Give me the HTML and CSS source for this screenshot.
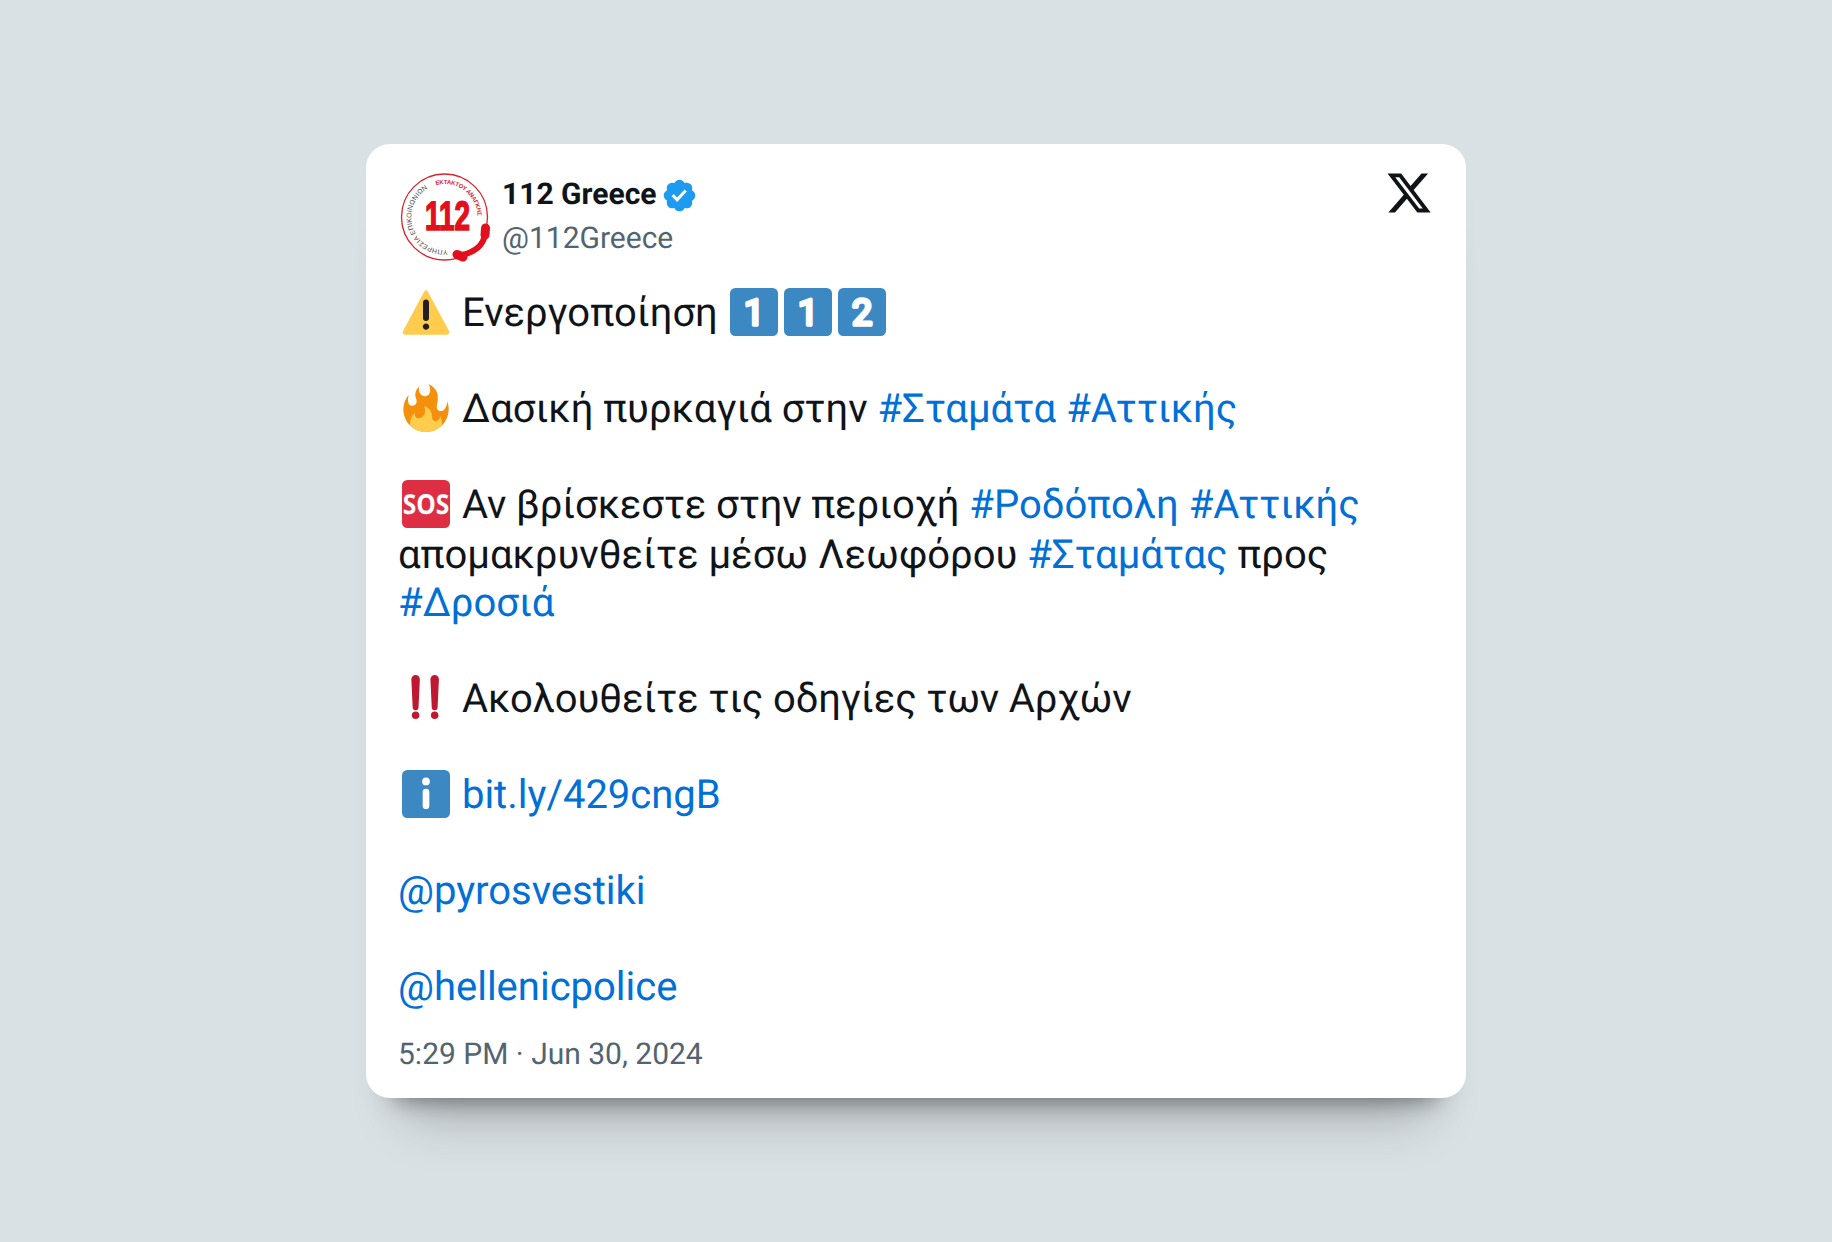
FILE: index.html
```html
<!DOCTYPE html>
<html lang="el">
<head>
<meta charset="utf-8">
<title>112 Greece</title>
<link rel="stylesheet" href="styles.css">
</head>
<body>
<article class="card">
  <header class="head">
    <div class="author">
      <svg class="avatar" viewBox="0 0 90 90" role="img" aria-label="112">
        <defs>
          <path id="ring-a" d="M47.4 77.9 A33 33 0 0 1 36 13.1"/>
          <path id="ring-b" d="M36 13.1 A33 33 0 0 1 77 50.7"/>
        </defs>
        <circle cx="44.500" cy="45" r="43" class="logo-ring"/>
        <text class="logo-small"><textPath href="#ring-a">ΥΠΗΡΕΣΙΑ ΕΠΙΚΟΙΝΩΝΙΩΝ</textPath></text>
        <text class="logo-red"><textPath href="#ring-b">ΕΚΤΑΚΤΟΥ ΑΝΑΓΚΗΣ</textPath></text>
        <text class="logo-num" x="25" y="57.500" textLength="45" lengthAdjust="spacingAndGlyphs">112</text>
        <path class="logo-gap" d="M85 60 Q83 78 60 84"/>
        <path class="logo-phone" d="M85 62 Q83 78 62 83"/>
        <path class="logo-phone-end" d="M85.500 56 L85 63 M57 82.500 L63 85"/>
      </svg>
      <div class="names">
        <div class="name">112 Greece
          <svg class="badge" viewBox="0 0 24 24"><path class="badge-fill" d="M22.25 12c0-1.43-.88-2.67-2.19-3.34.46-1.39.2-2.9-.81-3.91s-2.52-1.27-3.91-.81c-.66-1.31-1.91-2.19-3.34-2.19s-2.67.88-3.33 2.19c-1.4-.46-2.91-.2-3.92.81s-1.26 2.52-.8 3.91c-1.31.67-2.2 1.91-2.2 3.34s.89 2.67 2.2 3.34c-.46 1.39-.21 2.9.8 3.91s2.52 1.26 3.91.81c.67 1.31 1.91 2.19 3.34 2.19s2.68-.88 3.34-2.19c1.39.45 2.9.2 3.91-.81s1.27-2.52.81-3.91c1.31-.67 2.19-1.91 2.19-3.34zm-11.71 4.2L6.8 12.46l1.41-1.42 2.26 2.26 4.8-5.23 1.47 1.36-6.2 6.77z"/></svg>
        </div>
        <div class="handle">@112Greece</div>
      </div>
    </div>
    <svg class="xlogo" viewBox="0 0 24 24"><path d="M18.244 2.25h3.308l-7.227 8.26 8.502 11.24H16.17l-5.214-6.817L4.99 21.75H1.68l7.73-8.835L1.254 2.25H8.08l4.713 6.231zm-1.161 17.52h1.833L7.084 4.126H5.117z"/></svg>
  </header>
  <p class="text"><svg class="emoji" viewBox="0 0 36 36"><path class="e-yellow" d="M2.653 35C.811 35-.001 33.662.847 32.027L16.456 2.972c.849-1.635 2.238-1.635 3.087 0l15.609 29.055c.85 1.635.037 2.973-1.805 2.973H2.653z"/><path class="e-dark" d="M15.583 28.953c0-1.333 1.085-2.418 2.419-2.418 1.333 0 2.418 1.085 2.418 2.418 0 1.334-1.086 2.419-2.418 2.419-1.334 0-2.419-1.085-2.419-2.419zm.186-18.293c0-1.302.961-2.108 2.232-2.108 1.241 0 2.233.837 2.233 2.108v11.938c0 1.271-.992 2.108-2.233 2.108-1.271 0-2.232-.807-2.232-2.108V10.66z"/></svg> Ενεργοποίηση <svg class="emoji emoji-first" viewBox="0 0 36 36"><rect class="e-blue" width="36" height="36" rx="4"/><text class="key" x="18" y="27.800">1</text></svg><svg class="emoji" viewBox="0 0 36 36"><rect class="e-blue" width="36" height="36" rx="4"/><text class="key" x="18" y="27.800">1</text></svg><svg class="emoji" viewBox="0 0 36 36"><rect class="e-blue" width="36" height="36" rx="4"/><text class="key" x="18" y="27.800">2</text></svg><br><br><svg class="emoji" viewBox="0 0 36 36"><path class="e-orange" d="M35 19c0-2.062-.367-4.039-1.04-5.868-.46 5.389-3.333 8.157-6.335 6.868-2.812-1.208-.917-5.917-.777-8.164.236-3.809-.012-8.169-6.931-11.794 2.875 5.5.333 8.917-2.333 9.125-2.958.231-5.667-2.542-4.667-7.042-3.238 2.386-3.332 6.402-2.333 9 1.042 2.708-.042 4.958-2.583 5.208-2.84.28-4.418-3.041-2.963-8.333C2.52 10.965 1 14.805 1 19c0 9.389 7.611 17 17 17s17-7.611 17-17z"/><path class="e-yellow" d="M28.394 23.999c.148 3.084-2.561 4.293-4.019 3.709-2.106-.843-1.541-2.291-2.083-5.291s-2.625-5.083-5.708-6c2.25 6.333-1.247 8.667-3.08 9.084-1.872.426-3.753-.001-3.968-4.007C7.352 23.668 6 26.676 6 30c0 .368.023.73.055 1.09C9.125 34.124 13.342 36 18 36s8.875-1.876 11.945-4.91c.032-.36.055-.722.055-1.09 0-2.184-.584-4.231-1.606-6.001z"/></svg> Δασική πυρκαγιά στην <a>#Σταμάτα</a> <a>#Αττικής</a><br><br><svg class="emoji" viewBox="0 0 36 36"><rect class="e-red" width="36" height="36" rx="4"/><text class="sos" x="18" y="25.300" textLength="35" lengthAdjust="spacingAndGlyphs">SOS</text></svg> <span class="tight">Αν βρίσκεστε στην περιοχή</span> <a>#Ροδόπολη</a> <a>#Αττικής</a><span class="rest">απομακρυνθείτε μέσω Λεωφόρου <a>#Σταμάτας</a> προς <a>#Δροσιά</a></span><br><svg class="emoji" viewBox="0 0 36 36"><g class="e-crimson"><path d="M7 4a3.200 3.200 0 0 1 6.400 0l-1 21a2.200 2.200 0 0 1-4.400 0z"/><path d="M21.300 4a3.200 3.200 0 0 1 6.400 0l-1 21a2.200 2.200 0 0 1-4.400 0z"/><circle cx="10.200" cy="31" r="2.800"/><circle cx="24.500" cy="31" r="2.800"/></g></svg> <span class="tight">Ακολουθείτε τις οδηγίες των Αρχών</span><br><br><svg class="emoji" viewBox="0 0 36 36"><rect class="e-blue" width="36" height="36" rx="4"/><g class="e-white"><circle cx="18" cy="8.600" r="2.900"/><rect x="15.500" y="14" width="5" height="15.300" rx="2.500"/></g></svg> <a>bit.ly/429cngB</a><br><br><a>@pyrosvestiki</a><br><br><a>@hellenicpolice</a></p>
  <footer class="time">5:29 PM · Jun 30, 2024</footer>
</article>
</body>
</html>
```
FILE: styles.css
```css
* { box-sizing: border-box; }
html, body { height: 100%; }
body {
  margin: 0;
  display: flex;
  align-items: center;
  justify-content: center;
  background: #dae1e4;
  font-family: Roboto, "Noto Sans", sans-serif;
  color: #0f1419;
  text-rendering: geometricPrecision;
}
.card {
  width: 1100px;
  height: 954px;
  padding: 28px 33px 0 32px;
  background: #fff;
  border-radius: 24px;
  box-shadow: 0 28px 24px -28px rgba(0, 0, 0, .5), 0 60px 50px -40px rgba(0, 0, 0, .22);
}
.head { display: flex; justify-content: space-between; align-items: flex-start; }
.author { display: flex; align-items: center; gap: 12px; margin-left: 2px; }
.avatar { width: 90px; height: 90px; display: block; }
.names { display: flex; flex-direction: column; }
.name { display: flex; align-items: center; gap: 5px; font-size: 30px; font-weight: 700; line-height: 44px; }
.handle { font-size: 30px; line-height: 44px; color: #536471; }
.badge { width: 37px; height: 37px; }
.badge-fill { fill: #1d9bf0; }
.xlogo { width: 48px; height: 48px; fill: #0f1419; margin-top: -3px; }
.text { margin: 27px 0 0; font-size: 40px; line-height: 48px; }
.text a { color: #006fd6; }
.tight { letter-spacing: -.1px; }
.rest { display: block; margin-top: 2px; }
.emoji { width: 48px; height: 48px; margin: -8px 2px -8px 4px; vertical-align: -2px; }
.emoji-first { margin-left: 2px; }
.time { margin-top: 24px; font-size: 30px; line-height: 40px; color: #536471; }
.e-yellow { fill: #ffcc4d; }
.e-dark { fill: #231f20; }
.e-orange { fill: #f4900c; }
.e-blue { fill: #3b88c3; }
.e-red { fill: #dd2e44; }
.e-crimson { fill: #be1931; }
.e-white { fill: #fff; }
.key {
  font-family: Roboto, sans-serif;
  font-weight: 400;
  font-size: 27px;
  text-anchor: middle;
  fill: #fff;
  stroke: #fff;
  stroke-width: 2.600px;
  stroke-linejoin: round;
}
.sos {
  font-family: "Open Sans", sans-serif;
  font-weight: 700;
  font-size: 20.600px;
  text-anchor: middle;
  fill: #fff;
}
.logo-ring { fill: none; stroke: #d8202e; stroke-width: 1.300px; }
.logo-small { font-family: "Liberation Sans", sans-serif; font-size: 6.800px; letter-spacing: .2px; fill: #444; }
.logo-red { font-family: "Liberation Sans", sans-serif; font-size: 6px; font-weight: 700; letter-spacing: -.25px; fill: #d8202e; }
.logo-num { font-family: "Liberation Sans", sans-serif; font-weight: 700; font-size: 41px; fill: #e2101c; stroke: #e2101c; stroke-width: 1.600px; }
.logo-gap { fill: none; stroke: #fff; stroke-width: 10px; }
.logo-phone { fill: none; stroke: #e2101c; stroke-width: 6px; }
.logo-phone-end { fill: none; stroke: #e2101c; stroke-width: 9px; stroke-linecap: round; }
```
